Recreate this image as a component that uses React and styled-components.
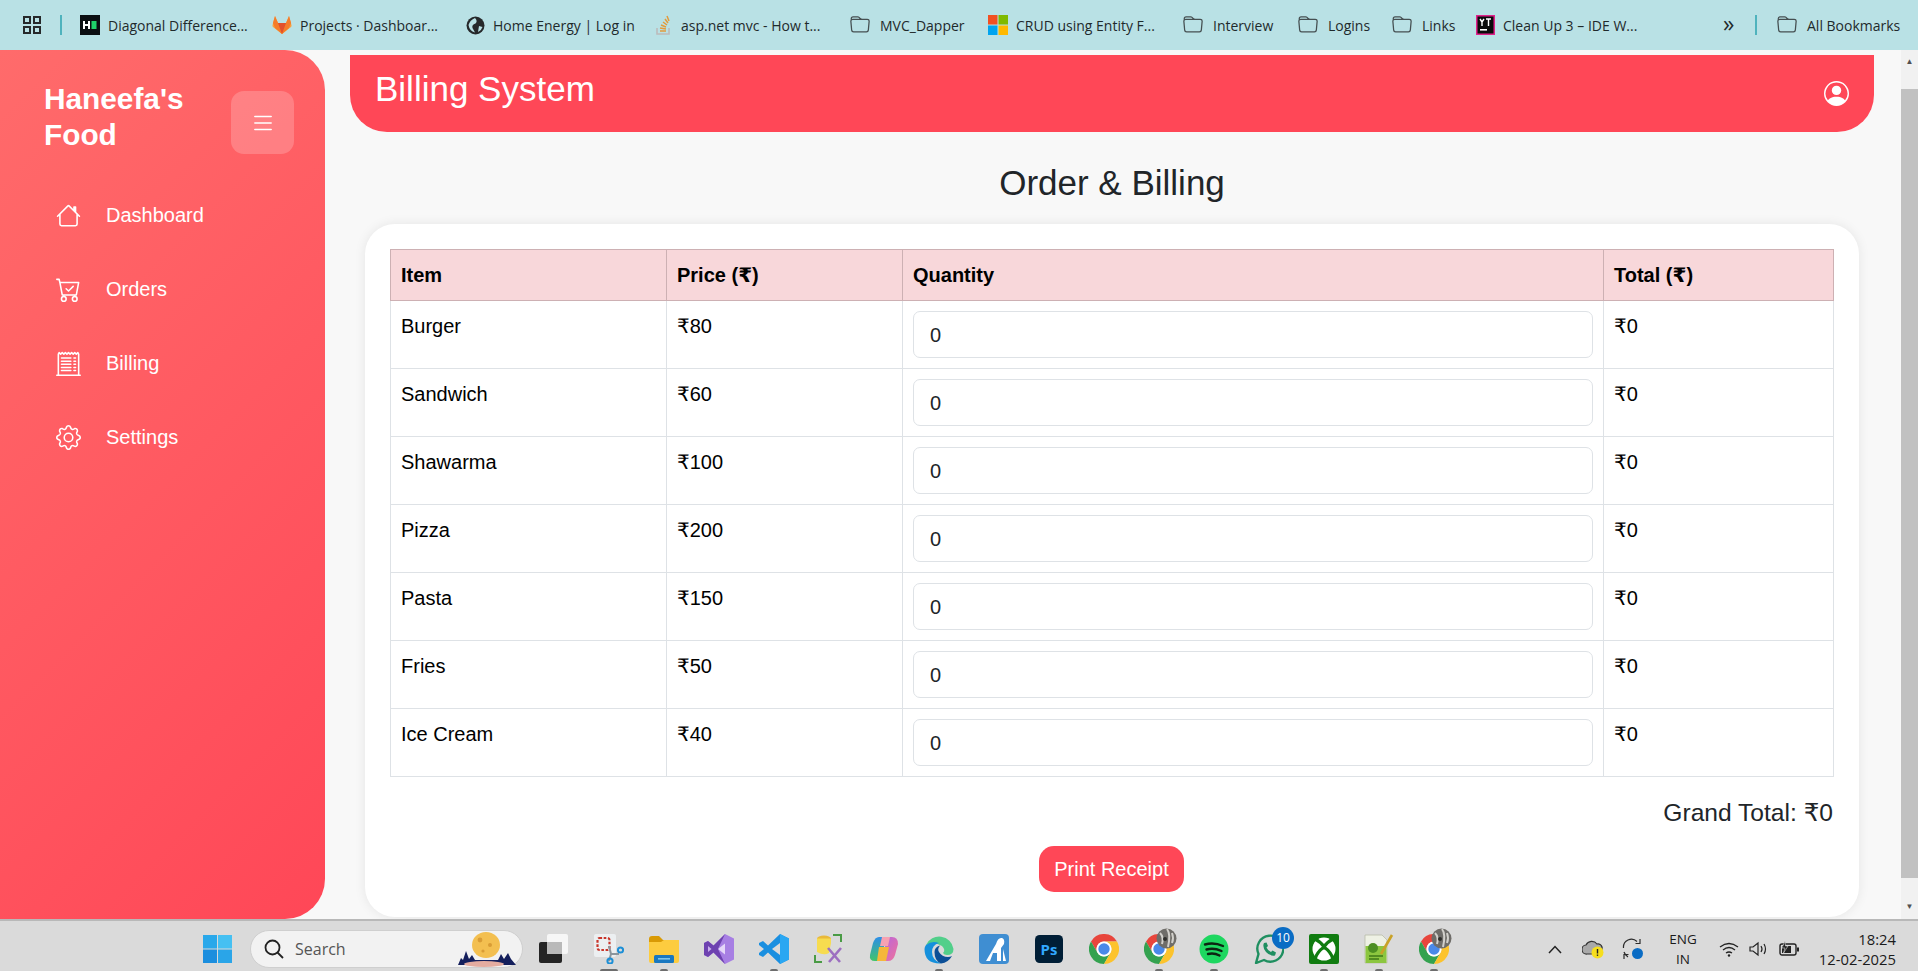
import React from 'react';
import styled, { createGlobalStyle } from 'styled-components';
import { BsHouse, BsCartCheck, BsReceiptCutoff, BsGear, BsList, BsPersonCircle, BsFolder } from 'react-icons/bs';

const GlobalStyle = createGlobalStyle`
  html, body { margin: 0; height: 100%; overflow: hidden; }
  body { font-family: "Liberation Sans", Arial, "DejaVu Sans", sans-serif; color: #212529; }
  * { box-sizing: border-box; }
`;

const Screen = styled.div`
  height: 971px;
  display: flex;
  flex-direction: column;
  overflow: hidden;
`;

/* browser bookmarks bar */
const BookmarkBar = styled.div`
  height: 50px;
  flex: none;
  display: flex;
  align-items: center;
  padding-left: 23px;
  background: #b9e1e5;
  font-family: "Open Sans", sans-serif;
  font-size: 14px;
  color: #1f2a2c;
`;

const Bookmark = styled.div`
  width: ${p => p.$w}px;
  flex: none;
  display: flex;
  align-items: center;
  gap: 8px;
  white-space: nowrap;
  overflow: hidden;
`;

const BarDivider = styled.div`
  width: 2px;
  height: 20px;
  flex: none;
  margin: ${p => p.$m};
  background: #4fb3bd;
`;

const FolderIcon = styled(BsFolder)`
  width: 20px;
  height: 20px;
  margin-right: 2px;
  flex: none;
  color: #454f51;
`;

const Chevrons = styled.div`
  width: 32px;
  flex: none;
  font-size: 23px;
  line-height: 20px;
  margin-top: -4px;
`;

/* the page between the bars */
const Viewport = styled.div`
  flex: 1;
  min-height: 0;
  display: flex;
  background: #f8f8f8;
`;

const Sidebar = styled.aside`
  width: 325px;
  flex: none;
  padding: 31px 32px 0 44px;
  background: linear-gradient(135deg, #ff6b6b, #ff4757);
  border-radius: 0 40px 40px 0;
  color: #fff;
`;

const Brand = styled.div`
  display: flex;
  justify-content: space-between;
  align-items: flex-start;
  margin-bottom: 36px;
`;

const BrandName = styled.h2`
  margin: 0;
  font-size: 29.8px;
  line-height: 36px;
  font-weight: 700;
`;

const MenuButton = styled.div`
  width: 63px;
  height: 63px;
  flex: none;
  margin-top: 10px;
  margin-right: -1px;
  display: flex;
  align-items: center;
  justify-content: center;
  background: rgba(255, 255, 255, 0.2);
  border-radius: 13px;
  font-size: 26px;
`;

const Nav = styled.nav`
  display: flex;
  flex-direction: column;
  gap: 24px;
`;

const NavItem = styled.div`
  height: 50px;
  padding-left: 12px;
  display: flex;
  align-items: center;
  gap: 25px;
  font-size: 20px;
  svg { width: 25px; height: 25px; flex: none; }
`;

const Main = styled.main`
  flex: 1;
  min-width: 0;
  padding: 5px 27px 0 25px;
  overflow: hidden;
`;

const TopBar = styled.header`
  height: 77px;
  padding: 0 25px;
  display: flex;
  justify-content: space-between;
  align-items: center;
  background: #ff4757;
  border-radius: 0 0 37px 37px;
  color: #fff;
`;

const AppName = styled.div`
  font-size: 35px;
  margin-top: -9px;
`;

const ProfileIcon = styled(BsPersonCircle)`
  width: 25px;
  height: 25px;
`;

const PageTitle = styled.h1`
  margin: 30px 0 20px;
  height: 42px;
  line-height: 42px;
  font-size: 35px;
  font-weight: 400;
  text-align: center;
`;

const Card = styled.section`
  margin: 0 15px 0 15px;
  height: 693px;
  padding: 25px 26px 25px 25px;
  background: #fff;
  border-radius: 30px;
  box-shadow: 0 0 12px rgba(0, 0, 0, 0.08);
`;

const BillTable = styled.table`
  width: 100%;
  table-layout: fixed;
  border-collapse: collapse;
  font-size: 20px;
  line-height: 30px;
  color: #000;
`;

const HeadCell = styled.th`
  padding: 10px;
  text-align: left;
  font-weight: 700;
  background: #f8d7da;
  border: 1px solid #cdb0b3;
`;

const Cell = styled.td`
  padding: 10px;
  vertical-align: top;
  border: 1px solid #dee2e6;
`;

const QtyInput = styled.input`
  display: block;
  width: 100%;
  height: 47px;
  padding: 1px 16px 0;
  border: 1px solid #dee2e6;
  border-radius: 7px;
  outline: none;
  font: inherit;
  color: #212529;
  background: #fff;
`;

const GrandTotal = styled.div`
  margin-top: 17px;
  font-size: 24.6px;
  line-height: 37px;
  text-align: right;
`;

const ButtonRow = styled.div`
  margin-top: 15px;
  display: flex;
  justify-content: center;
`;

const PrintButton = styled.button`
  height: 46px;
  padding: 0 15px;
  border: none;
  border-radius: 15px;
  background: #ff4757;
  color: #fff;
  font: inherit;
  font-size: 20px;
`;

/* browser scrollbar */
const ScrollTrack = styled.div`
  width: 17px;
  flex: none;
  display: flex;
  flex-direction: column;
  background: #f1f1f1;
`;

const ScrollArrow = styled.div`
  height: 17px;
  flex: none;
  margin-top: ${p => p.$mt || 0}px;
  display: flex;
  align-items: center;
  justify-content: center;
  font-size: 8px;
  color: #505050;
`;

const ScrollThumb = styled.div`
  height: 789px;
  flex: none;
  margin-top: 19px;
  background: #c1c1c1;
`;

/* windows taskbar */
const Taskbar = styled.footer`
  height: 52px;
  flex: none;
  display: flex;
  align-items: center;
  padding: 6px 22px 0 203px;
  background: #dadada;
  border-top: 2px solid #b8b8b8;
  font-family: "Open Sans", sans-serif;
  color: #1b1b1b;
`;

const SearchBox = styled.div`
  width: 273px;
  height: 38px;
  margin: 0 3px 0 18px;
  padding: 0 6px 0 13px;
  display: flex;
  align-items: center;
  gap: 11px;
  background: #f2f2f2;
  border: 1px solid #cfcfcf;
  border-radius: 19px;
  font-size: 16px;
  color: #555;
`;

const SearchArt = styled.svg`
  margin-left: auto;
`;

const AppSlot = styled.div`
  position: relative;
  width: 55px;
  height: 44px;
  flex: none;
  display: flex;
  align-items: center;
  justify-content: center;
`;

const RunDot = styled.span`
  position: absolute;
  bottom: 0;
  left: 50%;
  width: ${p => (p.$active ? 18 : 8)}px;
  height: 2px;
  transform: translateX(-50%);
  border-radius: 2px 2px 0 0;
  background: #6d6d6d;
`;

const CountBadge = styled.span`
  position: absolute;
  top: 0;
  right: 2px;
  width: 22px;
  height: 22px;
  border-radius: 50%;
  background: #0a6cc4;
  color: #fff;
  font-size: 12px;
  line-height: 22px;
  text-align: center;
`;

const AvatarOverlay = styled.svg`
  position: absolute;
  top: 1px;
  right: 9px;
`;

const Tray = styled.div`
  margin-left: auto;
  display: flex;
  align-items: center;
`;

const TrayIcon = styled.div`
  width: ${p => p.$w || 30}px;
  flex: none;
  display: flex;
  justify-content: center;
`;

const LangBlock = styled.div`
  width: 50px;
  margin: 0 6px 0 5px;
  text-align: center;
  font-size: 13.5px;
  line-height: 20px;
`;

const Clock = styled.div`
  width: 92px;
  text-align: right;
  font-size: 14.8px;
  line-height: 20px;
`;

const Glyph = ({ size = 30, children }) => (
  <svg width={size} height={size} viewBox="0 0 30 30">{children}</svg>
);

const ChromeIcon = () => (
  <Glyph>
    <path d="M28 7.5 A15 15 0 0 0 2 7.5 L8.5 18.75 A7.5 7.5 0 0 1 15 7.5 Z" fill="#e8453c" />
    <path d="M2 7.5 A15 15 0 0 0 15 30 L21.5 18.75 A7.5 7.5 0 0 1 8.5 18.75 Z" fill="#34a24f" />
    <path d="M15 30 A15 15 0 0 0 28 7.5 L15 7.5 A7.5 7.5 0 0 1 21.5 18.75 Z" fill="#fcc32c" />
    <circle cx="15" cy="15" r="7.5" fill="#fff" />
    <circle cx="15" cy="15" r="5.7" fill="#4a89e8" />
  </Glyph>
);

const ChromeProfile = () => (
  <>
    <ChromeIcon />
    <AvatarOverlay width="21" height="21" viewBox="0 0 21 21">
      <circle cx="10.5" cy="10.5" r="10" fill="#6f6d69" />
      <path d="M4 5 Q8 9 6 16 M11 1 Q15 6 12 19 M16 5 Q18 10 16 15" stroke="#d2d0cb" strokeWidth="2" fill="none" />
      <circle cx="9" cy="11" r="2" fill="#2f2e2b" />
    </AvatarOverlay>
  </>
);

const apps = [
  {
    key: 'taskview',
    icon: (
      <Glyph>
        <rect x="8" y="0" width="21" height="20" rx="2" fill="#f6f6f6" />
        <rect x="0" y="8" width="23" height="21" rx="2" fill="#242424" />
        <path d="M8 8 H23 V20 H8 Z" fill="#b9b9b9" />
      </Glyph>
    ),
  },
  {
    key: 'snip',
    dot: true,
    active: true,
    icon: (
      <Glyph>
        <rect x="0" y="0" width="22" height="23" rx="2" fill="#eceff1" />
        <rect x="3.5" y="4" width="12" height="12" rx="2" fill="none" stroke="#c9352a" strokeWidth="2.2" strokeDasharray="2.6 1.6" />
        <path d="M15 12 L17 20 M17 20 H25 M17 20 L15 27" stroke="#8b959c" strokeWidth="2" />
        <circle cx="26.5" cy="16" r="2.6" fill="none" stroke="#1d8fd6" strokeWidth="2" />
        <circle cx="16" cy="27" r="2.6" fill="none" stroke="#1d8fd6" strokeWidth="2" />
      </Glyph>
    ),
  },
  {
    key: 'files',
    dot: true,
    icon: (
      <Glyph>
        <path d="M0 5 Q0 2 3 2 H10 L14 6 H28 V12 H0 Z" fill="#d99a05" />
        <path d="M0 8 H12 L15 6 H30 V27 Q30 29 28 29 H2 Q0 29 0 27 Z" fill="#fdcc3f" />
        <rect x="5" y="21" width="20" height="8" rx="1.5" fill="#1a78c0" />
        <rect x="9" y="24" width="12" height="1.6" fill="#7cc4ec" />
      </Glyph>
    ),
  },
  {
    key: 'vs',
    icon: (
      <Glyph>
        <path d="M21 0 L30 4.5 V25.5 L21 30 L9.5 18.5 L4 23 L0 21 V9 L4 7 L9.5 11.5 Z" fill="#a77fe3" />
        <path d="M21 9.5 L14 15 L21 20.5 Z" fill="#e4d6f8" />
        <path d="M21 0 L9.5 11.5 L4 7 L0 9 V21 L4 23 L9.5 18.5 L21 30 L14 15 Z" fill="#6e42b0" />
        <path d="M4 12 V18 L7.5 15 Z" fill="#c9b0ee" />
      </Glyph>
    ),
  },
  {
    key: 'vscode',
    dot: true,
    icon: (
      <Glyph>
        <path d="M21 0 L30 4.5 V25.5 L21 30 L9 18.5 L4 23 L0 21 V19 L5 15 L0 11 V9 L4 7 L9 11.5 Z" fill="#1a8fe0" />
        <path d="M21 0 L30 4.5 V25.5 L21 30 Z" fill="#2aa7f2" />
        <path d="M21 9 L13 15 L21 21 Z" fill="#dadada" />
      </Glyph>
    ),
  },
  {
    key: 'tools',
    icon: (
      <Glyph>
        <ellipse cx="10" cy="4.5" rx="7" ry="3" fill="#e9b93a" />
        <path d="M3 4.5 V18 Q10 22 15 19 L17 9 V4.5 Z" fill="#f7dc4f" />
        <path d="M19 1 H27 V8 M1 21 V28 H8" stroke="#4a9b45" strokeWidth="2" fill="none" />
        <path d="M14 14 L26 28 M27 14 L15 28" stroke="#9c6fc0" strokeWidth="2.6" />
      </Glyph>
    ),
  },
  {
    key: 'copilot',
    icon: (
      <Glyph>
        <defs>
          <linearGradient id="copA" x1="0" y1="0" x2="0" y2="1">
            <stop offset="0" stopColor="#2d8ee8" />
            <stop offset="1" stopColor="#41c46b" />
          </linearGradient>
          <linearGradient id="copB" x1="0" y1="0" x2="1" y2="1">
            <stop offset="0" stopColor="#b565e0" />
            <stop offset="1" stopColor="#f0739a" />
          </linearGradient>
        </defs>
        <path d="M10 3 H17 L12 27 H6 Q0 27 1 21 L4 9 Q6 3 10 3 Z" fill="url(#copA)" />
        <path d="M18 3 H23 Q29 3 29 10 L26 21 Q24 27 19 27 H13 Z" fill="url(#copB)" />
        <path d="M10 13 H20 L17 27 H8 Z" fill="#f5b73b" />
        <path d="M13 3 H21 L19 12 H11 Z" fill="#f6a2b2" />
      </Glyph>
    ),
  },
  {
    key: 'edge',
    dot: true,
    icon: (
      <Glyph>
        <path d="M2 11 A14.5 14.5 0 0 1 29.5 15 Q29.5 21 23 21 Q20 21 19 19 Q22 16 18 12 Q10 7 2 11 Z" fill="#52cf8a" />
        <path d="M2 11 Q8 6 15 9 Q8 11 8 18 Q8 26 17 29.5 Q0.5 30 0.5 15 Q0.5 13 2 11 Z" fill="#1590dc" />
        <path d="M10.5 18 Q10.5 13 16 11.5 Q13 15 15 18 Q18 23 24 23 Q26 23 28 22 A14.5 14.5 0 0 1 17 29.5 Q10.5 27 10.5 18 Z" fill="#0c4f97" />
      </Glyph>
    ),
  },
  {
    key: 'azure',
    icon: (
      <Glyph>
        <rect width="30" height="30" rx="4" fill="#3f8ed2" />
        <path d="M7 27 L17 10 Q19 3 23 4 Q26 5 25 10 L22 14 V27 H18 V19 L14 19 L11 27 Z" fill="#fff" />
        <path d="M24 15 L27 27 H24 Z" fill="#fff" />
      </Glyph>
    ),
  },
  {
    key: 'ps',
    icon: (
      <Glyph size={28}>
        <rect width="30" height="30" rx="5" fill="#001e36" />
        <text x="15" y="21" textAnchor="middle" fontSize="16" fontWeight="700" fontFamily="Open Sans, sans-serif" fill="#31a8ff">Ps</text>
      </Glyph>
    ),
  },
  { key: 'chrome', icon: <ChromeIcon /> },
  { key: 'chrome-profile', dot: true, icon: <ChromeProfile /> },
  {
    key: 'spotify',
    dot: true,
    icon: (
      <Glyph>
        <circle cx="15" cy="15" r="14.5" fill="#1ed760" />
        <path d="M6 10.5 Q15 8 24 12 M7.5 15.5 Q15 13.5 22.5 17 M9 20 Q15 18.5 20.5 21.5" stroke="#0c2412" strokeWidth="2.4" fill="none" strokeLinecap="round" />
      </Glyph>
    ),
  },
  {
    key: 'whatsapp',
    badge: '10',
    icon: (
      <Glyph>
        <path d="M2 29 L4.5 20 A13 13 0 1 1 10 26 Z" fill="none" stroke="#1f8f60" strokeWidth="2.4" strokeLinejoin="round" />
        <path d="M10 9 Q8 13 12 18 Q16 22.5 21 21.5 L22 18.5 L18.5 16.5 L17 18 Q14 17 12.5 13.5 L14 12 L12.5 8.5 Z" fill="#1f8f60" />
      </Glyph>
    ),
  },
  {
    key: 'xbox',
    dot: true,
    icon: (
      <Glyph>
        <rect width="30" height="30" rx="2" fill="#107c10" />
        <circle cx="15" cy="15" r="11.5" fill="#fff" />
        <path d="M6 5 Q12 8 15 13 Q18 8 24 5 M15 13 Q8 18 6 25 M15 13 Q22 18 24 25" stroke="#107c10" strokeWidth="3.2" fill="none" />
      </Glyph>
    ),
  },
  {
    key: 'notepad',
    dot: true,
    icon: (
      <Glyph>
        <path d="M1 1 H18 L23 6 V29 H1 Z" fill="#eef1e4" stroke="#b8bda8" strokeWidth="0.8" />
        <rect x="1.5" y="12" width="21" height="17" fill="#8cc63f" />
        <circle cx="9" cy="14" r="5" fill="#4d8f22" />
        <path d="M5 22 H19 M5 25 H15" stroke="#3f7a18" strokeWidth="1.4" />
        <path d="M28 1 L17 20" stroke="#c9a227" strokeWidth="2.6" />
      </Glyph>
    ),
  },
  { key: 'chrome-profile-2', dot: true, icon: <ChromeProfile /> },
];

const bookmarks = [
  {
    w: 192,
    label: 'Diagonal Difference...',
    icon: (
      <svg width="20" height="20" viewBox="0 0 20 20">
        <rect width="20" height="20" fill="#0b0f12" />
        <path d="M3 6 H5 V9 H8 V6 H10 V14 H8 V11 H5 V14 H3 Z" fill="#fff" />
        <rect x="11.5" y="6" width="5" height="8" fill="#1fd16a" />
      </svg>
    ),
  },
  {
    w: 194,
    label: 'Projects · Dashboar...',
    icon: (
      <svg width="20" height="20" viewBox="0 0 20 20">
        <path d="M10 19 L1 12 Q0 11 1 8 L3 1 L6 8 H14 L17 1 L19 8 Q20 11 19 12 Z" fill="#f9a03f" />
        <path d="M10 19 L3 13 L1 8 L3 1 L6 8 H14 L17 1 L19 8 L17 13 Z" fill="#f47c2a" />
        <path d="M10 19 L6 8 H14 Z" fill="#e2502b" />
      </svg>
    ),
  },
  {
    w: 188,
    label: 'Home Energy | Log in',
    icon: (
      <svg width="19" height="19" viewBox="0 0 19 19">
        <circle cx="9.5" cy="9.5" r="9" fill="#26292b" />
        <path d="M9 2 Q12 5 9.5 7.5 Q5.5 8.5 6.5 12 L9 16.5 Q3.5 15 2.5 9 Q4 4 9 2 Z M13 10 L16.5 11 Q15.5 14.5 12 16 Z" fill="#b9e1e5" />
      </svg>
    ),
  },
  {
    w: 196,
    label: 'asp.net mvc - How t...',
    icon: (
      <svg width="19" height="20" viewBox="0 0 19 20">
        <path d="M3 13 V19 H15 V13" stroke="#bcbbbb" strokeWidth="1.6" fill="none" />
        <path d="M6 16 H12 M6 13 L12 14 M7 10 L12 12 M9 7 L13 10 M11 4 L14 8 M13 1 L15 6" stroke="#e29b3b" strokeWidth="1.5" />
      </svg>
    ),
  },
  { w: 138, folder: true, label: 'MVC_Dapper' },
  {
    w: 195,
    label: 'CRUD using Entity F...',
    icon: (
      <svg width="20" height="20" viewBox="0 0 20 20">
        <rect width="9.5" height="9.5" fill="#f25022" />
        <rect x="10.5" width="9.5" height="9.5" fill="#7fba00" />
        <rect y="10.5" width="9.5" height="9.5" fill="#00a4ef" />
        <rect x="10.5" y="10.5" width="9.5" height="9.5" fill="#ffb900" />
      </svg>
    ),
  },
  { w: 115, folder: true, label: 'Interview' },
  { w: 94, folder: true, label: 'Logins' },
  { w: 84, folder: true, label: 'Links' },
  {
    w: 247,
    label: 'Clean Up 3 – IDE W...',
    icon: (
      <svg width="19" height="20" viewBox="0 0 19 20">
        <rect width="19" height="20" fill="#e0218a" />
        <rect x="1.5" y="1.5" width="16" height="17" fill="#0a0a0a" />
        <rect x="4" y="14" width="7" height="1.6" fill="#fff" />
        <path d="M4 4 L6 7 L8 4 M6 7 V11 M10 4 H15 M12.5 4 V11" stroke="#fff" strokeWidth="1.4" fill="none" />
      </svg>
    ),
  },
];

const menu = [
  { label: 'Dashboard', Icon: BsHouse },
  { label: 'Orders', Icon: BsCartCheck },
  { label: 'Billing', Icon: BsReceiptCutoff },
  { label: 'Settings', Icon: BsGear },
];

const foods = [
  ['Burger', 80],
  ['Sandwich', 60],
  ['Shawarma', 100],
  ['Pizza', 200],
  ['Pasta', 150],
  ['Fries', 50],
  ['Ice Cream', 40],
];

const App = () => {
  return (
    <Screen>
      <GlobalStyle />
      <BookmarkBar>
        <svg width="18" height="18" viewBox="0 0 18 18" fill="none" stroke="#26292b" strokeWidth="2">
          <rect x="1" y="1" width="6" height="6" />
          <rect x="11" y="1" width="6" height="6" />
          <rect x="1" y="11" width="6" height="6" />
          <rect x="11" y="11" width="6" height="6" />
        </svg>
        <BarDivider $m="0 18px 0 19px" />
        {bookmarks.map(b => (
          <Bookmark key={b.label} $w={b.w}>
            {b.folder ? <FolderIcon /> : b.icon}
            {b.label}
          </Bookmark>
        ))}
        <Chevrons>»</Chevrons>
        <BarDivider $m="0 20px 0 0" />
        <Bookmark $w={141}><FolderIcon />All Bookmarks</Bookmark>
      </BookmarkBar>

      <Viewport>
        <Sidebar>
          <Brand>
            <BrandName>Haneefa's Food</BrandName>
            <MenuButton><BsList /></MenuButton>
          </Brand>
          <Nav>
            {menu.map(({ label, Icon }) => (
              <NavItem key={label}><Icon />{label}</NavItem>
            ))}
          </Nav>
        </Sidebar>

        <Main>
          <TopBar>
            <AppName>Billing System</AppName>
            <ProfileIcon />
          </TopBar>
          <PageTitle>Order &amp; Billing</PageTitle>
          <Card>
            <BillTable>
              <colgroup>
                <col style={{ width: 276 }} />
                <col style={{ width: 236 }} />
                <col style={{ width: 701 }} />
                <col style={{ width: 230 }} />
              </colgroup>
              <thead>
                <tr>
                  <HeadCell>Item</HeadCell>
                  <HeadCell>Price (₹)</HeadCell>
                  <HeadCell>Quantity</HeadCell>
                  <HeadCell>Total (₹)</HeadCell>
                </tr>
              </thead>
              <tbody>
                {foods.map(([name, price]) => (
                  <tr key={name}>
                    <Cell>{name}</Cell>
                    <Cell>₹{price}</Cell>
                    <Cell><QtyInput type="text" defaultValue="0" /></Cell>
                    <Cell>₹0</Cell>
                  </tr>
                ))}
              </tbody>
            </BillTable>
            <GrandTotal>Grand Total: ₹0</GrandTotal>
            <ButtonRow>
              <PrintButton>Print Receipt</PrintButton>
            </ButtonRow>
          </Card>
        </Main>

        <ScrollTrack>
          <ScrollArrow $mt={3}>▲</ScrollArrow>
          <ScrollThumb />
          <ScrollArrow $mt={20}>▼</ScrollArrow>
        </ScrollTrack>
      </Viewport>

      <Taskbar>
        <svg width="29" height="28" viewBox="0 0 29 28">
          <rect width="14" height="13.5" fill="#29a8ea" />
          <rect x="15" width="14" height="13.5" fill="#45c0f2" />
          <rect y="14.5" width="14" height="13.5" fill="#1b8ede" />
          <rect x="15" y="14.5" width="14" height="13.5" fill="#2aa5e8" />
        </svg>
        <SearchBox>
          <svg width="20" height="20" viewBox="0 0 20 20" fill="none" stroke="#222" strokeWidth="1.8">
            <circle cx="8.5" cy="8.5" r="7" />
            <path d="M13.5 13.5 L19 19" />
          </svg>
          Search
          <SearchArt width="58" height="36" viewBox="0 0 58 36">
            <ellipse cx="28" cy="14" rx="14" ry="13" fill="#f3bf50" />
            <circle cx="22" cy="9" r="2.4" fill="#d99c35" />
            <circle cx="32" cy="14" r="2" fill="#d99c35" />
            <circle cx="25" cy="20" r="1.6" fill="#d99c35" />
            <path d="M0 34 L3 27 L5 29 L8 20 L11 28 L14 24 L17 29 L40 29 L43 23 L46 28 L50 22 L53 28 L58 34 Z" fill="#141f5c" />
            <ellipse cx="26" cy="33" rx="20" ry="3" fill="#e4aca0" />
          </SearchArt>
        </SearchBox>
        {apps.map(a => (
          <AppSlot key={a.key}>
            {a.icon}
            {a.badge && <CountBadge>{a.badge}</CountBadge>}
            {a.dot && <RunDot $active={a.active} />}
          </AppSlot>
        ))}
        <Tray>
          <TrayIcon $w={36}>
            <svg width="14" height="9" viewBox="0 0 14 9" fill="none" stroke="#222" strokeWidth="1.5"><path d="M1 8 L7 1.5 L13 8" /></svg>
          </TrayIcon>
          <TrayIcon $w={40}>
            <svg width="22" height="20" viewBox="0 0 22 20">
              <path d="M5 15 A4.5 4.5 0 0 1 4 6 A6.5 6.5 0 0 1 15 5 A4 4 0 0 1 17 13 V15 Z" fill="#a9a9a9" stroke="#333" strokeWidth="1.2" />
              <circle cx="15.5" cy="13.5" r="6" fill="#f6de1e" />
              <rect x="14.8" y="10" width="1.4" height="4.5" fill="#222" />
              <rect x="14.8" y="15.5" width="1.4" height="1.4" fill="#222" />
            </svg>
          </TrayIcon>
          <TrayIcon $w={40}>
            <svg width="22" height="22" viewBox="0 0 22 22" fill="none" stroke="#2b2b2b" strokeWidth="1.2">
              <path d="M1.5 10 A8 8 0 0 1 15 3.5 M18 1 V5.5 H13.5 M2 14 Q3 17 6 19 M2 21 V16.5 H6.5" />
              <circle cx="15.5" cy="15.5" r="5.5" fill="#0a6cc4" stroke="none" />
            </svg>
          </TrayIcon>
          <LangBlock>ENG<br />IN</LangBlock>
          <TrayIcon $w={30}>
            <svg width="20" height="15" viewBox="0 0 20 15" fill="none" stroke="#222" strokeWidth="1.3">
              <path d="M1 5 Q10 -2 19 5 M4 8 Q10 3 16 8 M7 11 Q10 9 13 11" />
              <circle cx="10" cy="13.5" r="1.2" fill="#222" stroke="none" />
            </svg>
          </TrayIcon>
          <TrayIcon $w={30}>
            <svg width="20" height="16" viewBox="0 0 20 16" fill="none" stroke="#222" strokeWidth="1.2">
              <path d="M1 6 V10 H4 L9 14 V2 L4 6 Z M12 5 Q14 8 12 11 M15 3 Q18 8 15 13" />
            </svg>
          </TrayIcon>
          <TrayIcon $w={30}>
            <svg width="21" height="16" viewBox="0 0 21 16">
              <rect x="1" y="3" width="16" height="11" rx="2" fill="none" stroke="#222" strokeWidth="1.4" />
              <rect x="3" y="5" width="9" height="7" fill="#222" />
              <rect x="18" y="6.5" width="2" height="4" fill="#222" />
              <path d="M6 0 L3 7 H6 L4.5 12 L9 5 H6.5 Z" fill="#222" stroke="#dadada" strokeWidth="0.6" />
            </svg>
          </TrayIcon>
          <Clock>18:24<br />12-02-2025</Clock>
        </Tray>
      </Taskbar>
    </Screen>
  );
};

export default App;
